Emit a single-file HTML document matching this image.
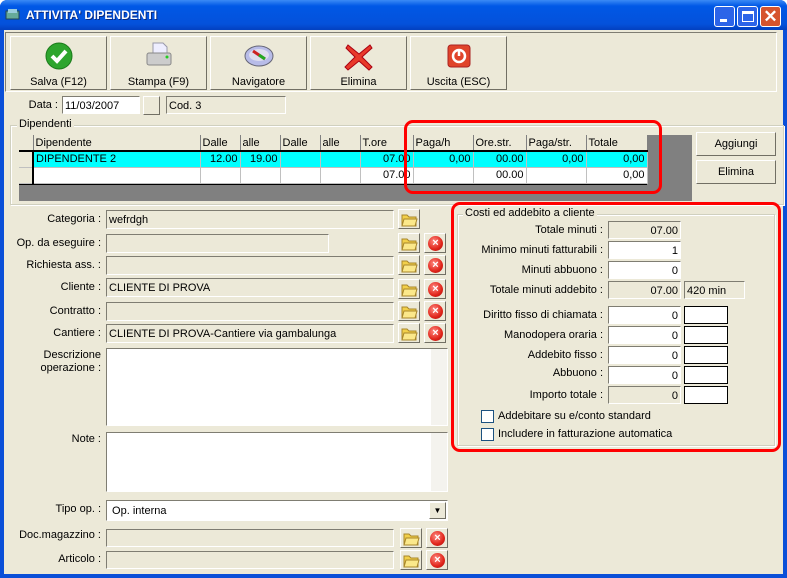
<!DOCTYPE html>
<html><head><meta charset="utf-8"><style>
*{box-sizing:border-box;margin:0;padding:0}
body{width:787px;height:578px;overflow:hidden;background:#fff;font-family:"Liberation Sans",sans-serif;font-size:11px;color:#000;position:relative}
.a{position:absolute}
.win{left:0;top:0;width:787px;height:578px;background:#0A4FD8;border-radius:7px 7px 0 0}
.title{left:0;top:0;width:787px;height:30px;background:linear-gradient(#3B8AF5,#0058E6 20%,#0451DB 80%,#0340C0);border-radius:7px 7px 0 0}
.body{left:4px;top:30px;width:779px;height:544px;background:#ECE9D8}
.tb{border:1px solid;border-color:#fff #716F64 #716F64 #fff;background:#ECE9D8;text-align:center}
.fld{border:1px solid;border-color:#7F7D72 #fff #fff #7F7D72;background:#ECE9D8;padding:2px 2px 0 2px;line-height:14px;white-space:nowrap;overflow:hidden}
.w{background:#fff}
.lbl{text-align:right;white-space:nowrap}
.btn{border:1px solid;border-color:#fff #716F64 #716F64 #fff;background:#ECE9D8}
.grp{border:1px solid #D0D0BF;box-shadow:inset 1px 1px 0 #fff,1px 1px 0 #fff}
.gl{background:#ECE9D8;padding:0 2px}
table{border-collapse:collapse;font-size:11px}
td{border-right:1px solid #C0C0C0;border-bottom:1px solid #C0C0C0;height:16px;padding:0 2px;white-space:nowrap;overflow:hidden}
.h td{background:#ECE9D8;border-right:1px solid #808080;border-bottom:2px solid #000}
.r{text-align:right}
.cy td{background:#00FFFF}
.ind{background:#ECE9D8!important;border-right:2px solid #000!important}
.fo{width:22px;height:20px}
.x{width:22px;height:20px}
.xi{position:absolute;left:3px;top:2px;width:15px;height:15px;border-radius:50%;background:radial-gradient(circle at 40% 35%,#ff8a80,#e0241a 60%,#a01010);color:#fff;font-weight:bold;font-size:11px;line-height:15px;text-align:center}
.red{border:3px solid #F00;border-radius:9px}
.cb{width:13px;height:13px;border:1px solid #1C5180;background:#fff}
</style></head><body>
<div class="a win"></div>
<div class="a title"></div>
<svg class="a" style="left:5px;top:8px" width="16" height="14"><rect x="1" y="3" width="13" height="8" fill="#6a9" stroke="#245" /><rect x="3" y="1" width="9" height="4" fill="#9cd"/></svg>
<div class="a" style="left:26px;top:8px;color:#fff;font-weight:bold;font-size:12px;text-shadow:1px 1px #0a2a80">ATTIVITA' DIPENDENTI</div>
<div class="a" style="left:714px;top:6px;width:21px;height:21px;border:1px solid #fff;border-radius:3px;background:#2C64E8"><div class="a" style="left:5px;top:12px;width:7px;height:3px;background:#fff"></div></div>
<div class="a" style="left:737px;top:6px;width:21px;height:21px;border:1px solid #fff;border-radius:3px;background:#2C64E8"><div class="a" style="left:4px;top:4px;width:12px;height:11px;border:1px solid #fff;border-top:3px solid #fff"></div></div>
<div class="a" style="left:760px;top:6px;width:21px;height:21px;border:1px solid #fff;border-radius:3px;background:#D6542E;color:#fff;font-weight:bold;font-size:17px;line-height:19px;text-align:center">✕</div>
<div class="a body"></div>
<div class="a" style="left:5px;top:32px;width:772px;height:60px;border:1px solid;border-color:#7F7D72 #fff #fff #7F7D72"></div>

<div class="a tb" style="left:10px;top:36px;width:97px;height:54px"><svg width="30" height="30" style="margin-top:4px"><circle cx="15" cy="15" r="13" fill="#2EA52E" stroke="#1a7a1a"/><path d="M8 15l5 5 9-10" stroke="#fff" stroke-width="4" fill="none"/></svg><div style="margin-top:2px">Salva (F12)</div></div>
<div class="a tb" style="left:110px;top:36px;width:97px;height:54px"><svg width="32" height="30" style="margin-top:4px"><path d="M10 2h10l4 4v8H10z" fill="#eef" stroke="#99a"/><rect x="4" y="12" width="24" height="12" rx="2" fill="#ccc" stroke="#888"/><circle cx="24" cy="16" r="1.5" fill="#2c2"/></svg><div style="margin-top:2px">Stampa (F9)</div></div>
<div class="a tb" style="left:210px;top:36px;width:97px;height:54px"><svg width="32" height="30" style="margin-top:4px"><ellipse cx="16" cy="15" rx="14" ry="10" fill="#B8BCE8" stroke="#667"/><ellipse cx="16" cy="14" rx="10" ry="6" fill="#DDE" /><path d="M10 10l12 8" stroke="#c22" stroke-width="3"/><path d="M16 14l6 4" stroke="#2a2" stroke-width="3"/></svg><div style="margin-top:2px">Navigatore</div></div>
<div class="a tb" style="left:310px;top:36px;width:97px;height:54px"><svg width="32" height="30" style="margin-top:4px"><path d="M5 4l11 9 11-9 2 3-10 9 10 10-3 3-10-9-11 9-3-3 10-10L3 7z" fill="#E8392A" stroke="#a01"/></svg><div style="margin-top:2px">Elimina</div></div>
<div class="a tb" style="left:410px;top:36px;width:97px;height:54px"><svg width="30" height="30" style="margin-top:4px"><rect x="4" y="4" width="22" height="22" rx="3" fill="#E0442A" stroke="#a22"/><circle cx="15" cy="15" r="6" fill="none" stroke="#fff" stroke-width="2.5"/><path d="M15 8v7" stroke="#fff" stroke-width="2.5"/></svg><div style="margin-top:2px">Uscita (ESC)</div></div>

<div class="a lbl" style="left:20px;top:99px;width:38px">Data :</div>
<div class="a fld w" style="left:62px;top:96px;width:78px;height:18px">11/03/2007</div>
<div class="a btn" style="left:143px;top:96px;width:17px;height:19px"></div>
<div class="a fld" style="left:166px;top:96px;width:120px;height:18px">Cod. 3</div>

<div class="a grp" style="left:10px;top:125px;width:774px;height:80px"></div>
<div class="a gl" style="left:17px;top:118px">Dipendenti</div>
<div class="a" style="left:19px;top:135px;width:673px;height:66px;background:#808080"></div>
<table class="a" style="left:19px;top:135px;width:628px;table-layout:fixed">
<col style="width:14px"><col style="width:167px"><col style="width:40px"><col style="width:40px"><col style="width:40px"><col style="width:40px"><col style="width:53px"><col style="width:60px"><col style="width:53px"><col style="width:60px"><col style="width:61px">
<tr class="h"><td></td><td>Dipendente</td><td>Dalle</td><td>alle</td><td>Dalle</td><td>alle</td><td>T.ore</td><td>Paga/h</td><td>Ore.str.</td><td>Paga/str.</td><td>Totale</td></tr>
<tr class="cy"><td class="ind"></td><td>DIPENDENTE 2</td><td class="r">12.00</td><td class="r">19.00</td><td></td><td></td><td class="r">07.00</td><td class="r">0,00</td><td class="r">00.00</td><td class="r">0,00</td><td class="r">0,00</td></tr>
<tr style="background:#fff"><td class="ind"></td><td></td><td></td><td></td><td></td><td></td><td class="r">07.00</td><td></td><td class="r">00.00</td><td></td><td class="r">0,00</td></tr>
</table>
<div class="a" style="left:19px;top:184px;width:628px;height:1px;background:#000"></div>
<div class="a btn" style="left:696px;top:132px;width:80px;height:24px;text-align:center;line-height:22px">Aggiungi</div>
<div class="a btn" style="left:696px;top:160px;width:80px;height:24px;text-align:center;line-height:22px">Elimina</div>
<div class="a red" style="left:404px;top:120px;width:258px;height:74px"></div>

<div class="a lbl" style="left:0;top:213px;width:101px">Categoria :</div>
<div class="a fld" style="left:106px;top:210px;width:288px;height:19px">wefrdgh</div>
<div class="a lbl" style="left:0;top:237px;width:101px">Op. da eseguire :</div>
<div class="a fld" style="left:106px;top:234px;width:223px;height:19px"></div>
<div class="a lbl" style="left:0;top:259px;width:101px">Richiesta ass. :</div>
<div class="a fld" style="left:106px;top:256px;width:288px;height:19px"></div>
<div class="a lbl" style="left:0;top:281px;width:101px">Cliente :</div>
<div class="a fld" style="left:106px;top:278px;width:288px;height:19px">CLIENTE DI PROVA</div>
<div class="a lbl" style="left:0;top:305px;width:101px">Contratto :</div>
<div class="a fld" style="left:106px;top:302px;width:288px;height:19px"></div>
<div class="a lbl" style="left:0;top:327px;width:101px">Cantiere :</div>
<div class="a fld" style="left:106px;top:324px;width:288px;height:19px">CLIENTE DI PROVA-Cantiere via gambalunga</div>
<div class="a lbl" style="left:0;top:349px;width:101px;line-height:13px">Descrizione<br>operazione :</div>
<div class="a fld w" style="left:106px;top:348px;width:342px;height:78px"><div class="a" style="right:0;top:0;width:16px;height:76px;background:#F4F3EE"></div></div>
<div class="a lbl" style="left:0;top:433px;width:101px">Note :</div>
<div class="a fld w" style="left:106px;top:432px;width:342px;height:60px"><div class="a" style="right:0;top:0;width:16px;height:58px;background:#F4F3EE"></div></div>
<div class="a lbl" style="left:0;top:503px;width:101px">Tipo op. :</div>
<div class="a fld w" style="left:106px;top:500px;width:342px;height:21px;padding-top:3px">&nbsp;Op. interna<div class="a btn" style="right:1px;top:1px;width:17px;height:17px;font-size:8px;text-align:center;line-height:15px">▼</div></div>
<div class="a lbl" style="left:0;top:529px;width:101px">Doc.magazzino :</div>
<div class="a fld" style="left:106px;top:529px;width:288px;height:18px"></div>
<div class="a lbl" style="left:0;top:553px;width:101px">Articolo :</div>
<div class="a fld" style="left:106px;top:551px;width:288px;height:18px"></div>

<div class="a btn fo" style="left:398px;top:209px"><svg width="20" height="18"><path d="M3 5h5l2 2h7v9H3z" fill="#F2D04A" stroke="#A8862A"/><path d="M5 9h13l-2 7H3z" fill="#FBE88A" stroke="#A8862A"/></svg></div>
<div class="a btn fo" style="left:398px;top:233px"><svg width="20" height="18"><path d="M3 5h5l2 2h7v9H3z" fill="#F2D04A" stroke="#A8862A"/><path d="M5 9h13l-2 7H3z" fill="#FBE88A" stroke="#A8862A"/></svg></div>
<div class="a btn fo" style="left:398px;top:255px"><svg width="20" height="18"><path d="M3 5h5l2 2h7v9H3z" fill="#F2D04A" stroke="#A8862A"/><path d="M5 9h13l-2 7H3z" fill="#FBE88A" stroke="#A8862A"/></svg></div>
<div class="a btn fo" style="left:398px;top:279px"><svg width="20" height="18"><path d="M3 5h5l2 2h7v9H3z" fill="#F2D04A" stroke="#A8862A"/><path d="M5 9h13l-2 7H3z" fill="#FBE88A" stroke="#A8862A"/></svg></div>
<div class="a btn fo" style="left:398px;top:301px"><svg width="20" height="18"><path d="M3 5h5l2 2h7v9H3z" fill="#F2D04A" stroke="#A8862A"/><path d="M5 9h13l-2 7H3z" fill="#FBE88A" stroke="#A8862A"/></svg></div>
<div class="a btn fo" style="left:398px;top:323px"><svg width="20" height="18"><path d="M3 5h5l2 2h7v9H3z" fill="#F2D04A" stroke="#A8862A"/><path d="M5 9h13l-2 7H3z" fill="#FBE88A" stroke="#A8862A"/></svg></div>
<div class="a btn fo" style="left:400px;top:528px"><svg width="20" height="18"><path d="M3 5h5l2 2h7v9H3z" fill="#F2D04A" stroke="#A8862A"/><path d="M5 9h13l-2 7H3z" fill="#FBE88A" stroke="#A8862A"/></svg></div>
<div class="a btn fo" style="left:400px;top:550px"><svg width="20" height="18"><path d="M3 5h5l2 2h7v9H3z" fill="#F2D04A" stroke="#A8862A"/><path d="M5 9h13l-2 7H3z" fill="#FBE88A" stroke="#A8862A"/></svg></div>
<div class="a btn x" style="left:424px;top:233px"><div class="xi">×</div></div>
<div class="a btn x" style="left:424px;top:255px"><div class="xi">×</div></div>
<div class="a btn x" style="left:424px;top:279px"><div class="xi">×</div></div>
<div class="a btn x" style="left:424px;top:301px"><div class="xi">×</div></div>
<div class="a btn x" style="left:424px;top:323px"><div class="xi">×</div></div>
<div class="a btn x" style="left:426px;top:528px"><div class="xi">×</div></div>
<div class="a btn x" style="left:426px;top:550px"><div class="xi">×</div></div>

<div class="a grp" style="left:457px;top:214px;width:318px;height:232px"></div>
<div class="a gl" style="left:463px;top:207px">Costi ed addebito a cliente</div>
<div class="a red" style="left:451px;top:202px;width:330px;height:250px"></div>
<div class="a lbl" style="left:460px;top:224px;width:143px">Totale minuti :</div>
<div class="a fld r" style="left:608px;top:221px;width:73px;height:18px">07.00</div>
<div class="a lbl" style="left:460px;top:244px;width:143px">Minimo minuti fatturabili :</div>
<div class="a fld w r" style="left:608px;top:241px;width:73px;height:18px">1</div>
<div class="a lbl" style="left:460px;top:264px;width:143px">Minuti abbuono :</div>
<div class="a fld w r" style="left:608px;top:261px;width:73px;height:18px">0</div>
<div class="a lbl" style="left:460px;top:284px;width:143px">Totale minuti addebito :</div>
<div class="a fld r" style="left:608px;top:281px;width:73px;height:18px">07.00</div>
<div class="a fld" style="left:684px;top:281px;width:61px;height:18px">420 min</div>
<div class="a lbl" style="left:460px;top:309px;width:143px">Diritto fisso di chiamata :</div>
<div class="a fld w r" style="left:608px;top:306px;width:73px;height:18px">0</div>
<div class="a lbl" style="left:460px;top:329px;width:143px">Manodopera oraria :</div>
<div class="a fld w r" style="left:608px;top:326px;width:73px;height:18px">0</div>
<div class="a lbl" style="left:460px;top:349px;width:143px">Addebito fisso :</div>
<div class="a fld w r" style="left:608px;top:346px;width:73px;height:18px">0</div>
<div class="a lbl" style="left:460px;top:367px;width:143px">Abbuono :</div>
<div class="a fld w r" style="left:608px;top:366px;width:73px;height:18px">0</div>
<div class="a lbl" style="left:460px;top:389px;width:143px">Importo totale :</div>
<div class="a fld r" style="left:608px;top:386px;width:73px;height:18px">0</div>
<div class="a" style="left:684px;top:306px;width:44px;height:18px;border:1px solid #000;background:#fff"></div>
<div class="a" style="left:684px;top:326px;width:44px;height:18px;border:1px solid #000;background:#fff"></div>
<div class="a" style="left:684px;top:346px;width:44px;height:18px;border:1px solid #000;background:#fff"></div>
<div class="a" style="left:684px;top:366px;width:44px;height:18px;border:1px solid #000;background:#fff"></div>
<div class="a" style="left:684px;top:386px;width:44px;height:18px;border:1px solid #000;background:#fff"></div>
<div class="a cb" style="left:481px;top:410px"></div>
<div class="a" style="left:498px;top:410px">Addebitare su e/conto standard</div>
<div class="a cb" style="left:481px;top:428px"></div>
<div class="a" style="left:498px;top:428px">Includere in fatturazione automatica</div>
</body></html>
